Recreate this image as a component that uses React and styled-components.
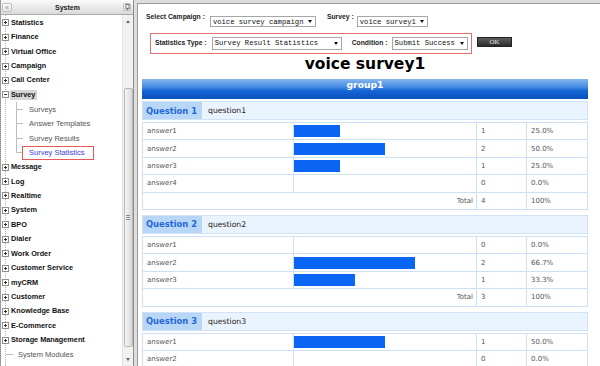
import React from 'react'
import styled, {createGlobalStyle} from 'styled-components'

const Global = createGlobalStyle`
  html, body { margin: 0; padding: 0; }
  body { background: #dedede; font-family: "Liberation Sans", Arial, sans-serif; }
`;

const topMenu = ['Statistics', 'Finance', 'Virtual Office', 'Campaign', 'Call Center'];
const surveyItems = ['Surveys', 'Answer Templates', 'Survey Results', 'Survey Statistics'];
const restMenu = ['Message', 'Log', 'Realtime', 'System', 'BPO', 'Dialer', 'Work Order', 'Customer Service',
   'myCRM', 'Customer', 'Knowledge Base', 'E-Commerce', 'Storage Management'];

// the last question runs past the bottom of the window, so its total row is left out
const questions = [
   {no: 1, title: 'question1', total: 4, answers: [
      ['answer1', 1, '25.0%', 0.25], ['answer2', 2, '50.0%', 0.5], ['answer3', 1, '25.0%', 0.25], ['answer4', 0, '0.0%', 0]]},
   {no: 2, title: 'question2', total: 3, answers: [
      ['answer1', 0, '0.0%', 0], ['answer2', 2, '66.7%', 0.667], ['answer3', 1, '33.3%', 0.333]]},
   {no: 3, title: 'question3', total: null, answers: [
      ['answer1', 1, '50.0%', 0.5], ['answer2', 0, '0.0%', 0]]},
];

const BAR_MAX = 182;

const App = () => (
   <Page>
      <Global />
      <Sidebar>
         <SideHead>
            <HeadBtn>«</HeadBtn>
            <span>System</span>
            <PinBtn>
               <svg width="5" height="6" viewBox="0 0 5 6"><rect x="1" y="0.5" width="3" height="4" fill="none" stroke="#777" /><line x1="2.5" y1="4.5" x2="2.5" y2="6" stroke="#777" /></svg>
            </PinBtn>
         </SideHead>
         <SideBody>
            <Tree>
               {topMenu.map(m => (
                  <Row key={m}><Toggle /><Label>{m}</Label></Row>
               ))}
               <Row><Toggle $open /><Label $active>Survey</Label></Row>
               {surveyItems.map((s, i) => (
                  <SubRow key={s} $last={i === surveyItems.length - 1}>
                     {i === surveyItems.length - 1 ? <Current>{s}</Current> : s}
                  </SubRow>
               ))}
               {restMenu.map(m => (
                  <Row key={m}><Toggle /><Label>{m}</Label></Row>
               ))}
               <LeafRow>System Modules</LeafRow>
               <LeafRow><LeafIcon /></LeafRow>
            </Tree>
            <ScrollBar>
               <Arrow><Tri /></Arrow>
               <Thumb><Grip /></Thumb>
               <Spacer />
               <Arrow><Tri $down /></Arrow>
            </ScrollBar>
         </SideBody>
      </Sidebar>

      <Main>
         <FilterRow>
            <FLabel>Select Campaign :</FLabel>
            <Select $w={106} $h={11} $ml={5}>voice survey campaign<Caret /></Select>
            <FLabel $ml={11}>Survey :</FLabel>
            <Select $w={71} $h={11} $ml={3}>voice survey1<Caret /></Select>
         </FilterRow>
         <ConditionLine>
            <ConditionBox>
               <FLabel $inline>Statistics Type :</FLabel>
               <Select $w={130} $h={13} $ml={5}>Survey Result Statistics<Caret /></Select>
               <FLabel $inline $ml={10}>Condition :</FLabel>
               <Select $w={76} $h={13} $ml={4}>Submit Success<Caret /></Select>
            </ConditionBox>
            <OkButton>OK</OkButton>
         </ConditionLine>

         <Title>voice survey1</Title>
         <GroupBar>group1</GroupBar>

         {questions.map(q => (
            <Block key={q.no}>
               <QHead>
                  <QLabel>Question {q.no}</QLabel>
                  <QText>{q.title}</QText>
               </QHead>
               <Table>
                  {q.answers.map(([name, count, pct, ratio]) => (
                     <AnswerRow key={name}>
                        <Cell>{name}</Cell>
                        <BarCell><Bar style={{width: Math.round(ratio * BAR_MAX)}} /></BarCell>
                        <Cell>{count}</Cell>
                        <Cell $last>{pct}</Cell>
                     </AnswerRow>
                  ))}
                  {q.total !== null && (
                     <TotalRow>
                        <Cell $right>Total</Cell>
                        <Cell>{q.total}</Cell>
                        <Cell $last>100%</Cell>
                     </TotalRow>
                  )}
               </Table>
            </Block>
         ))}
      </Main>
   </Page>
)

const Page = styled.div`
   display:flex; gap:3px; height:366px; overflow:hidden;
`;

/* ---------- sidebar ---------- */
const Sidebar = styled.aside`
   width:134px; flex:none; box-sizing:border-box;
   border-left:1px solid #9c9c9c; border-right:1px solid #8c8c8c;
   background:#fff; display:flex; flex-direction:column;
`;
const SideHead = styled.div`
   height:15px; flex:none; box-sizing:border-box;
   border-bottom:1px solid #ababab;
   background:linear-gradient(#fbfbfb, #dadada);
   display:flex; align-items:center; justify-content:space-between;
   padding:0 2px 0 1px;
   font:bold 7px "Liberation Sans", Arial, sans-serif; color:#222;
`;
const HeadBtn = styled.span`
   width:10px; height:9px; box-sizing:border-box;
   border:1px solid #bdbdbd; border-radius:2px;
   background:linear-gradient(#fff, #e6e6e6);
   display:flex; align-items:center; justify-content:center;
   font:7px "Liberation Sans", Arial, sans-serif; color:#888; line-height:1;
`;
const PinBtn = styled(HeadBtn)`
   width:8px; height:8px;
`;
const SideBody = styled.div`
   flex:1; display:flex; min-height:0;
`;
const Tree = styled.div`
   flex:1; padding:0.5px 0 0 1px; overflow:hidden;
   background:linear-gradient(#b5b5b5 50%, transparent 50%) 4px 4px / 1px 2px repeat-y;
`;
const Row = styled.div`
   height:14.45px; display:flex; align-items:center; gap:1px;
   font:bold 7.3px "Liberation Sans", Arial, sans-serif; color:#111; white-space:nowrap;
`;
const Toggle = styled.span`
   width:7px; height:7px; flex:none; box-sizing:border-box;
   border:1px solid #8f8f8f;
   background:
      linear-gradient(#333, #333) center / 3px 1px no-repeat,
      ${p => p.$open ? '' : 'linear-gradient(#333, #333) center / 1px 3px no-repeat,'}
      #fff;
`;
const Label = styled.span`
   padding:0 1.5px 0 1px; line-height:10px;
   background:${p => p.$active ? '#d6d6d6' : 'transparent'};
`;
const SubRow = styled.div`
   height:14.45px; display:flex; align-items:center; padding-left:27px;
   font:7.5px "Liberation Sans", Arial, sans-serif; color:#555; white-space:nowrap;
   background:
      linear-gradient(#bcbcbc, #bcbcbc) 14px 50% / 7px 1px no-repeat,
      linear-gradient(#bcbcbc, #bcbcbc) 14px 0 / 1px ${p => p.$last ? '50%' : '100%'} no-repeat;
`;
const Current = styled.span`
   margin-left:-7px; padding:1.5px 9px 1.5px 6px;
   border:1px solid #e45a5a; color:#3b3bdc;
`;
const LeafRow = styled(SubRow)`
   padding-left:16px;
   background:linear-gradient(#bcbcbc, #bcbcbc) 4px 50% / 7px 1px no-repeat;
`;
const LeafIcon = styled.span`
   width:6px; height:6px; margin:5px 0 0 5px; border-radius:1px;
   background:linear-gradient(#8fb7ef, #3e7ad6);
`;
const ScrollBar = styled.div`
   width:10px; flex:none; background:#f1f1f1; border-left:1px solid #e3e3e3;
   display:flex; flex-direction:column; align-items:center;
`;
const Arrow = styled.div`
   height:13px; width:100%; flex:none; display:flex; align-items:center; justify-content:center;
`;
const Tri = styled.span`
   width:0; height:0;
   border-left:2.5px solid transparent; border-right:2.5px solid transparent;
   ${p => p.$down ? 'border-top:3px solid #666;' : 'border-bottom:3px solid #666;'}
`;
const Thumb = styled.div`
   width:9px; height:259px; margin-top:60px; box-sizing:border-box; flex:none;
   border:1px solid #b8b8b8; border-radius:2px;
   background:linear-gradient(90deg, #f6f6f6, #d8d8d8);
   display:flex; align-items:center; justify-content:center;
`;
const Grip = styled.span`
   width:4px; height:5px;
   background:repeating-linear-gradient(#8a8a8a 0 1px, transparent 1px 2px);
`;
const Spacer = styled.div` flex:1; `;

/* ---------- main ---------- */
const Main = styled.main`
   flex:1; min-width:0; margin-top:3px;
   border-top:1px solid #9a9a9a; border-left:1px solid #9a9a9a;
   background:#fff; padding:12px 12px 0 4px;
`;
const FilterRow = styled.div`
   display:flex; align-items:flex-start; height:11px; padding-left:4px;
`;
const FLabel = styled.span`
   font:bold 6.8px "Liberation Sans", Arial, sans-serif; color:#222; white-space:nowrap;
   line-height:8px; margin-left:${p => p.$ml || 0}px;
   margin-top:${p => p.$inline ? 0 : -3}px;
`;
const Select = styled.div`
   width:${p => p.$w}px; height:${p => p.$h}px; flex:none; box-sizing:border-box;
   margin-left:${p => p.$ml}px;
   border:1px solid #a7a7a7; background:#fff;
   display:flex; align-items:center; justify-content:space-between;
   padding:0 3px 0 2px;
   font:7.2px "Liberation Mono", monospace; color:#111; white-space:nowrap;
`;
const Caret = styled.span`
   width:0; height:0; flex:none;
   border-left:2.5px solid transparent; border-right:2.5px solid transparent;
   border-top:3px solid #111;
`;
const ConditionLine = styled.div`
   display:flex; align-items:center; margin:6px 0 0 8px;
`;
const ConditionBox = styled.div`
   width:322px; height:21px; box-sizing:border-box;
   border:1px solid #e57070;
   display:flex; align-items:center; padding:0 0 1px 4px;
`;
const OkButton = styled.div`
   width:35px; height:10px; margin:-3px 0 0 5px; box-sizing:border-box;
   border:1px solid #222; background:linear-gradient(#5e5e5e, #2c2c2c);
   font:7px "Liberation Serif", serif; color:#e4e4e4; line-height:8px; text-align:center;
`;
const Title = styled.h1`
   margin:0; font:bold 15.5px "DejaVu Sans", Verdana, sans-serif; line-height:20px;
   text-align:center; color:#000;
`;
const GroupBar = styled.div`
   margin-top:5px; height:20px; line-height:20px; text-align:center;
   background:linear-gradient(#86b6f0, #458be5 40%, #1464d5 60%, #0a51bb);
   font:bold 9.2px "DejaVu Sans", Verdana, sans-serif; color:#fff;
   margin-bottom:2px;
`;
const Block = styled.section`
   margin-bottom:5px;
`;
const QHead = styled.div`
   height:19px; box-sizing:border-box; margin-bottom:2px;
   border:1px solid #cfe2f7; background:#eaf4fe;
   display:flex; align-items:stretch;
`;
const QLabel = styled.div`
   width:59px; box-sizing:border-box; padding-left:3px;
   background:#b8d6f6; display:flex; align-items:center;
   font:bold 8.4px "DejaVu Sans", Verdana, sans-serif; color:#2467d8; white-space:nowrap;
`;
const QText = styled.div`
   padding-left:6px; display:flex; align-items:center;
   font:7.7px "DejaVu Sans", Verdana, sans-serif; color:#222;
`;
const Table = styled.div`
   border:1px solid #cde0f5; border-bottom:none;
`;
const AnswerRow = styled.div`
   display:grid; grid-template-columns:151px 183px 50px 1fr;
   height:17.4px; box-sizing:border-box; border-bottom:1px solid #cde0f5;
`;
const TotalRow = styled(AnswerRow)`
   grid-template-columns:334px 50px 1fr;
`;
const Cell = styled.div`
   display:flex; align-items:center;
   justify-content:${p => p.$right ? 'flex-end' : 'flex-start'};
   padding:${p => p.$right ? '0 3px 0 0' : '0 0 0 4px'};
   border-right:${p => p.$last ? 'none' : '1px solid #cde0f5'};
   font:7px "DejaVu Sans", Verdana, sans-serif; color:#555;
`;
const BarCell = styled.div`
   display:flex; align-items:center; border-right:1px solid #cde0f5;
`;
const Bar = styled.div`
   height:12px; background:#0a64f4;
`;

export default App
